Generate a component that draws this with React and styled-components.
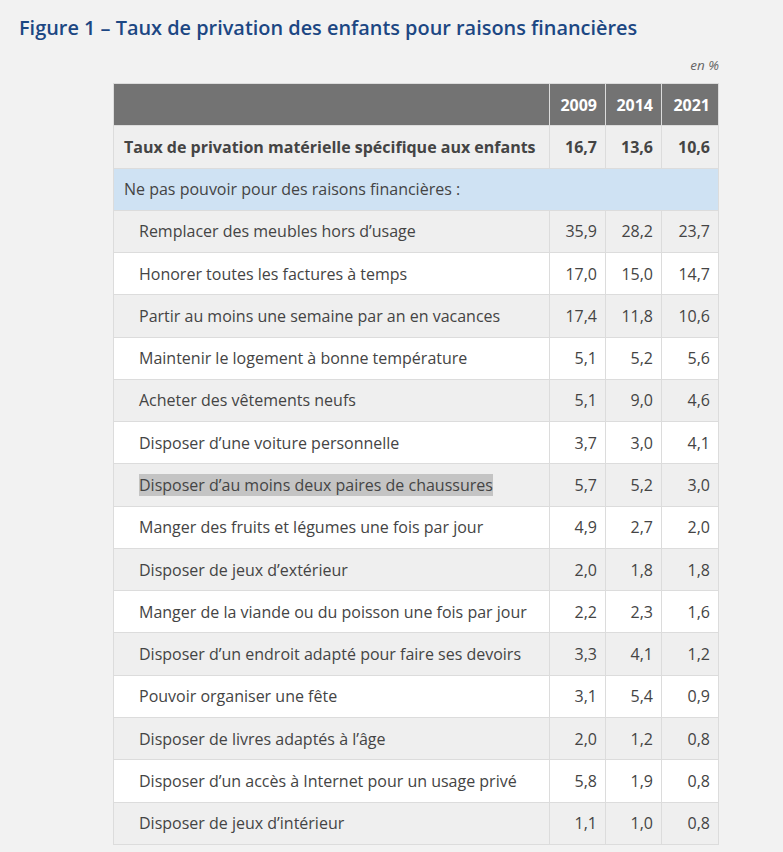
import React from "react";
import styled, { createGlobalStyle } from "styled-components";

const GlobalStyle = createGlobalStyle`
  body {
    margin: 0;
    background: #f2f2f2;
    font-family: "Open Sans", "Liberation Sans", sans-serif;
  }
`;

const Page = styled.div`
  padding: 14px 0 0 19px;
`;

const Title = styled.h2`
  margin: 0;
  font-size: 19.9px;
  font-weight: 600;
  line-height: 28px;
  color: #1c4783;
`;

const Figure = styled.div`
  width: 606px;
  margin: 13px 0 0 94px;
`;

const Unit = styled.div`
  text-align: right;
  font-size: 13.5px;
  font-style: italic;
  color: #666;
  line-height: 20px;
  margin-bottom: 8px;
`;

const Table = styled.table`
  width: 100%;
  table-layout: fixed;
  border-collapse: collapse;
  border: 1px solid #dcdcdc;
  font-size: 16px;
  color: #444;

  tr {
    height: 42.27px;
  }
`;

const Col = styled.col`
  width: ${(p) => p.$w || "auto"};
`;

const HeadCell = styled.th`
  background: #737373;
  color: #fff;
  font-weight: 700;
  text-align: right;
  padding: 0 8px;
  border-left: 1px solid #dcdcdc;

  &:first-child {
    border-left: none;
  }
`;

const Row = styled.tr`
  background: ${(p) =>
    p.$blue ? "#cfe2f3" : p.$grey ? "#efefef" : "#fff"};
  border-top: 1px solid #dcdcdc;
  font-weight: ${(p) => (p.$bold ? 700 : 400)};
`;

const Label = styled.td`
  padding: 0 8px 0 ${(p) => (p.$indent ? "25px" : "10px")};
  white-space: nowrap;
`;

const Num = styled.td`
  text-align: right;
  padding: 0 8px;
  border-left: 1px solid #dcdcdc;
`;

const Mark = styled.span`
  background: #c4c4c4;
`;

const rows = [
  ["Remplacer des meubles hors d’usage", "35,9", "28,2", "23,7"],
  ["Honorer toutes les factures à temps", "17,0", "15,0", "14,7"],
  ["Partir au moins une semaine par an en vacances", "17,4", "11,8", "10,6"],
  ["Maintenir le logement à bonne température", "5,1", "5,2", "5,6"],
  ["Acheter des vêtements neufs", "5,1", "9,0", "4,6"],
  ["Disposer d’une voiture personnelle", "3,7", "3,0", "4,1"],
  ["Disposer d’au moins deux paires de chaussures", "5,7", "5,2", "3,0", true],
  ["Manger des fruits et légumes une fois par jour", "4,9", "2,7", "2,0"],
  ["Disposer de jeux d’extérieur", "2,0", "1,8", "1,8"],
  ["Manger de la viande ou du poisson une fois par jour", "2,2", "2,3", "1,6"],
  ["Disposer d’un endroit adapté pour faire ses devoirs", "3,3", "4,1", "1,2"],
  ["Pouvoir organiser une fête", "3,1", "5,4", "0,9"],
  ["Disposer de livres adaptés à l’âge", "2,0", "1,2", "0,8"],
  ["Disposer d’un accès à Internet pour un usage privé", "5,8", "1,9", "0,8"],
  ["Disposer de jeux d’intérieur", "1,1", "1,0", "0,8"],
];

export default function App() {
  return (
    <>
      <GlobalStyle />
      <Page>
        <Title>Figure 1 – Taux de privation des enfants pour raisons financières</Title>
        <Figure>
          <Unit>en %</Unit>
          <Table>
            <colgroup>
              <Col />
              <Col $w="56px" />
              <Col $w="56px" />
              <Col $w="57px" />
            </colgroup>
            <thead>
              <tr>
                <HeadCell />
                <HeadCell>2009</HeadCell>
                <HeadCell>2014</HeadCell>
                <HeadCell>2021</HeadCell>
              </tr>
            </thead>
            <tbody>
              <Row $grey $bold>
                <Label>Taux de privation matérielle spécifique aux enfants</Label>
                <Num>16,7</Num>
                <Num>13,6</Num>
                <Num>10,6</Num>
              </Row>
              <Row $blue>
                <Label colSpan={4}>Ne pas pouvoir pour des raisons financières :</Label>
              </Row>
              {rows.map(([label, a, b, c, mark], i) => (
                <Row key={label} $grey={i % 2 === 0}>
                  <Label $indent>{mark ? <Mark>{label}</Mark> : label}</Label>
                  <Num>{a}</Num>
                  <Num>{b}</Num>
                  <Num>{c}</Num>
                </Row>
              ))}
            </tbody>
          </Table>
        </Figure>
      </Page>
    </>
  );
}
